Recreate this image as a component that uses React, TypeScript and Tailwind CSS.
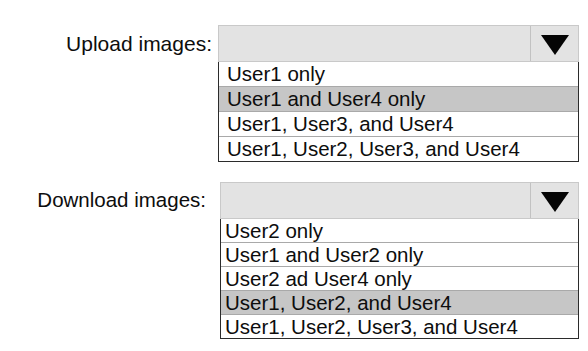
const Arrow = () => (
  <svg width="28" height="20" viewBox="0 0 28 20" className="mt-[3px]">
    <polygon points="0,0 28,0 14,20" fill="#050505" />
  </svg>
);

type DropdownProps = {
  options: string[];
  selected: number;
  rowHeight: string;
  textPad: string;
};

const Dropdown = ({ options, selected, rowHeight, textPad }: DropdownProps) => (
  <div className="flex flex-col">
    <div className="flex h-[37px] border border-[#c9c9c9] bg-[#e3e3e3]">
      <div className="flex-1" />
      <div className="flex w-[48px] items-center justify-center border-l border-[#c2c2c2]">
        <Arrow />
      </div>
    </div>
    <div className="border border-t-0 border-[#2b2b2b] bg-white">
      {options.map((option, index) => (
        <div
          key={option}
          className={`${rowHeight} ${textPad} whitespace-nowrap text-[20.5px] text-[#0d0d0d] ${
            index > 0 ? 'border-t border-[#a9a9a9]' : ''
          } ${index === selected ? 'bg-[#c6c6c6]' : ''}`}
        >
          {option}
        </div>
      ))}
    </div>
  </div>
);

export default function App() {
  return (
    <div className="h-[351px] w-[588px] bg-white pt-[25px] font-['Liberation_Sans',Arial,sans-serif]">
      <div className="flex">
        <div className="flex h-[37px] w-[212px] items-center justify-end text-[21px] text-[#0d0d0d]">
          Upload images:
        </div>
        <div className="ml-[6px] w-[361px]">
          <Dropdown
            options={['User1 only', 'User1 and User4 only', 'User1, User3, and User4', 'User1, User2, User3, and User4']}
            selected={1}
            rowHeight="h-[25px] leading-[24px] first:h-[24px]"
            textPad="pl-[8px]"
          />
        </div>
      </div>

      <div className="mt-[20px] flex">
        <div className="flex h-[36px] w-[206px] items-center justify-end text-[20.5px] text-[#0d0d0d]">
          Download images:
        </div>
        <div className="ml-[14px] w-[359px]">
          <Dropdown
            options={['User2 only', 'User1 and User2 only', 'User2 ad User4 only', 'User1, User2, and User4', 'User1, User2, User3, and User4']}
            selected={3}
            rowHeight="h-[24px] leading-[23px] first:h-[23px]"
            textPad="pl-[4px]"
          />
        </div>
      </div>
    </div>
  );
}
